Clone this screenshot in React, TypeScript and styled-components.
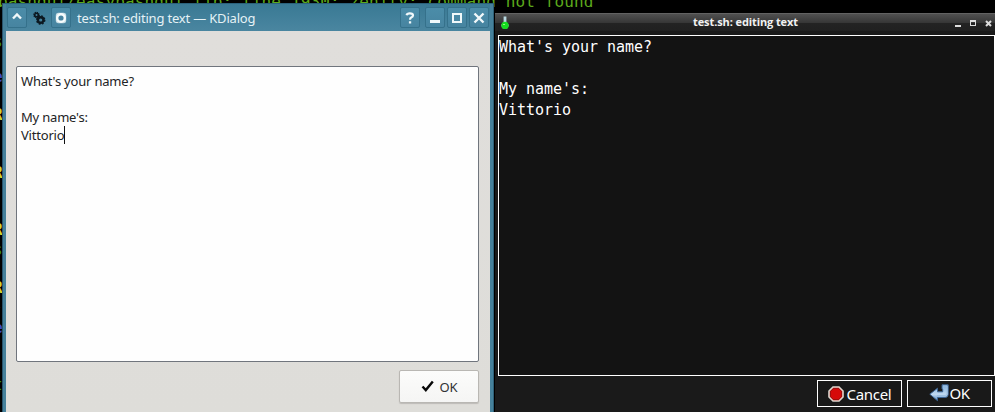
import React from "react";
import styled, { createGlobalStyle } from "styled-components";

const GlobalStyle = createGlobalStyle`
  * { box-sizing: border-box; }
  body { margin: 0; background: #000; }
  svg { display: block; flex: none; }
`;

const Desktop = styled.main`
  position: relative;
  width: 995px;
  height: 412px;
  overflow: hidden;
  background: #000;
`;

const Terminal = styled.div`
  position: absolute;
  inset: 0;
  font: 16px/18px "DejaVu Sans Mono", monospace;
  letter-spacing: 0.13px;
  color: #5ca91c;
  white-space: pre;
`;

const TerminalLine = styled.div<{ $top: number; $left?: number; $color?: string; $bold?: boolean }>`
  position: absolute;
  top: ${(p) => p.$top}px;
  left: ${(p) => p.$left ?? -7}px;
  color: ${(p) => p.$color ?? "#5ca91c"};
  font-weight: ${(p) => (p.$bold ? 700 : 400)};
`;

const KWindow = styled.section`
  position: absolute;
  left: 2px;
  top: 3px;
  width: 492px;
  height: 409px;
  display: flex;
  flex-direction: column;
  padding: 0 3px 0 3px;
  background: #46819b;
  border-left: 1px solid #29546c;
  border-right: 1px solid #2e6077;
  border-top: 1px solid #2b617b;
`;

const KTitleBar = styled.header`
  height: 27px;
  flex: none;
  display: flex;
  align-items: center;
  gap: 2px;
  padding: 2px 1px 2px 1px;
  background: linear-gradient(#397994, #4a86a0);
  color: #e5f2f6;
  font: 13px/20px "Noto Sans", sans-serif;
  letter-spacing: -0.19px;
`;

const KTitle = styled.h1`
  margin: 1px auto 0 4px;
  font: inherit;
  white-space: nowrap;
`;

const KControl = styled.button<{ $plain?: boolean; $shift?: boolean }>`
  width: 20px;
  height: 21px;
  padding: 0;
  margin-left: ${(p) => (p.$shift ? 3 : 0)}px;
  display: grid;
  place-items: center;
  color: #f0f8fa;
  border: 1px solid ${(p) => (p.$plain ? "transparent" : "#35718b")};
  border-radius: 2px;
  background: ${(p) => (p.$plain ? "transparent" : "linear-gradient(#4b8da9, #4784a0)")};
`;

const KContent = styled.div`
  flex: 1;
  display: flex;
  flex-direction: column;
  align-items: flex-end;
  padding: 35px 11px 0 10px;
  background: linear-gradient(#e0dedb, #deddd9);
`;

const LightEditor = styled.div`
  width: 100%;
  height: 296px;
  padding: 5px 4px;
  border: 1px solid #70757d;
  border-radius: 2px;
  background: #fefefe;
  color: #222325;
  font: 13px/18px "Noto Sans", sans-serif;
  letter-spacing: -0.2px;
  white-space: pre;
`;

const Caret = styled.span`
  display: inline-block;
  width: 1px;
  height: 18px;
  background: #111;
  vertical-align: top;
`;

const LightButton = styled.button`
  width: 80px;
  height: 33px;
  margin-top: 8px;
  padding: 0;
  display: flex;
  align-items: center;
  justify-content: center;
  gap: 6px;
  border: 1px solid #b9b7b3;
  border-radius: 2px;
  background: linear-gradient(#fcfcfb, #f5f5f4);
  box-shadow: 0 1px 1px #bdbbb7;
  color: #303234;
  font: 13px/18px "Noto Sans", sans-serif;
  letter-spacing: -0.2px;
`;

const DarkWindow = styled.section`
  position: absolute;
  left: 495px;
  top: 13px;
  width: 500px;
  height: 399px;
  display: flex;
  flex-direction: column;
  background: #1a1a1a;
`;

const DarkTitleBar = styled.header`
  height: 18px;
  flex: none;
  display: grid;
  grid-template-columns: 44px 1fr 45px;
  align-items: center;
  padding: 0 3px 0 5px;
  border-top: 1px solid #626262;
  background: linear-gradient(#505050 0%, #373737 50%, #232323 51%, #202020 100%);
`;

const DarkTitle = styled.h1`
  margin: 0;
  padding-bottom: 2px;
  text-align: center;
  color: #f1f1f1;
  font: bold 11px/16px "Open Sans", sans-serif;
  letter-spacing: -0.1px;
`;

const DarkControls = styled.div`
  display: flex;
  justify-content: flex-end;
  gap: 8px;
`;

const DarkEditor = styled.div`
  height: 341px;
  flex: none;
  margin: 4px 0 0 3px;
  padding-top: 1px;
  border: 1px solid #fff;
  background: #131313;
  color: #fff;
  font: 15px/21px "DejaVu Sans Mono", monospace;
  letter-spacing: -0.03px;
  white-space: pre;
`;

const DarkActions = styled.footer`
  display: flex;
  justify-content: flex-end;
  gap: 5px;
  padding: 4px 3px 0 0;
`;

const DarkButton = styled.button<{ $tight?: boolean }>`
  width: 85px;
  height: 27px;
  display: flex;
  align-items: center;
  justify-content: center;
  gap: ${(p) => (p.$tight ? 0 : 3)}px;
  padding: 0 0 ${(p) => (p.$tight ? 2 : 0)}px;
  border: 1px solid #fff;
  background: #191919;
  color: #fff;
  font: 15px/22px "Noto Sans", sans-serif;
  letter-spacing: ${(p) => (p.$tight ? -0.4 : -0.3)}px;
`;

const terminalMarks = [
  { top: 33, text: "s", color: "#398d15" },
  { top: 68, text: "e", color: "#3948c6", bold: true },
  { top: 106, text: "R", color: "#d4d52e", bold: true },
  { top: 164, text: "R", color: "#d4d52e", bold: true },
  { top: 221, text: "R", color: "#d4d52e", bold: true },
  { top: 241, text: "s", color: "#398d15" },
  { top: 279, text: "R", color: "#d4d52e", bold: true },
  { top: 298, text: "-", color: "#398d15" },
  { top: 319, text: "e", color: "#3948c6", bold: true },
  { top: 376, text: "t", color: "#398d15" },
];

function GearsIcon() {
  return (
    <svg width="14" height="16" viewBox="0 0 14 16" fill="none" stroke="#0c1820">
      <circle cx="4.5" cy="5" r="1.8" strokeWidth="1.6" />
      <circle cx="4.5" cy="5" r="2.7" strokeWidth="1.1" strokeDasharray="1.3 0.8" />
      <circle cx="8.7" cy="10" r="2.8" strokeWidth="2.4" />
      <circle cx="8.7" cy="10" r="4.1" strokeWidth="1.3" strokeDasharray="1.8 1.42" />
    </svg>
  );
}

function FlaskIcon() {
  return (
    <svg width="10" height="14" viewBox="0 0 10 14">
      <path d="M3.6 0.5h2.8V6l2.4 3-1 3-2.8 1-2.8-1-1-3 2.4-3z" fill="#b9d9e2" />
      <circle cx="5" cy="9.4" r="3.7" fill="#16dc20" />
      <path d="M3 8.5h2" stroke="#8aff73" />
    </svg>
  );
}

function ReturnIcon() {
  return (
    <svg width="20" height="18" viewBox="0 0 20 18">
      <defs>
        <linearGradient id="returnFill" x2="0" y2="1">
          <stop stopColor="#7fadd9" />
          <stop offset=".6" stopColor="#c1daf2" />
          <stop offset="1" stopColor="#5589c0" />
        </linearGradient>
      </defs>
      <path d="M13 .8h6.2v9.5q0 3.2-3 3.2H8.5v3.2L.8 10.2l7.7-6V7.8h5.2V5H13z" fill="url(#returnFill)" stroke="#3d6594" />
      <path d="M14 2h4v8q0 1.5-2 1.5H8" fill="none" stroke="#9fc1e2" />
    </svg>
  );
}

export default function App() {
  return (
    <>
      <GlobalStyle />
      <Desktop>
        <Terminal>
          <TerminalLine $top={-7} $left={-2}>bashgui/easybashgui.lib: line 1930: zenity: command not found</TerminalLine>
          {terminalMarks.map((mark) => (
            <TerminalLine key={mark.top} $top={mark.top} $color={mark.color} $bold={mark.bold}>{mark.text}</TerminalLine>
          ))}
        </Terminal>
        <KWindow>
          <KTitleBar>
            <KControl aria-label="Shade">
              <svg width="12" height="12" viewBox="0 0 12 12" fill="none" stroke="currentColor" strokeWidth="2.4"><path d="m2 6.5 4-4 4 4" /></svg>
            </KControl>
            <KControl $plain aria-label="Application"><GearsIcon /></KControl>
            <KControl aria-label="All desktops">
              <svg width="12" height="12" viewBox="0 0 12 12" fill="none"><rect x=".8" y=".8" width="10.4" height="10.4" rx="2.6" fill="#c5dce4" /><circle cx="6" cy="6" r="3.8" fill="#4784a0" stroke="#f7fcfd" strokeWidth="2.4" /></svg>
            </KControl>
            <KTitle>test.sh: editing text — KDialog</KTitle>
            <KControl aria-label="Help">
              <svg width="12" height="14" viewBox="0 0 12 14" fill="none" stroke="currentColor" strokeWidth="2.2"><path d="M2.6 4.2Q3 2.3 5.8 2.3 9 2.3 9 4.5 9 5.8 7.2 6.6 6 7.2 6 8.8M4.9 11.3h2.3" /></svg>
            </KControl>
            <KControl $shift aria-label="Minimize">
              <svg width="12" height="12" viewBox="0 0 12 12"><path d="M1 8h10v3H1z" fill="currentColor" /></svg>
            </KControl>
            <KControl aria-label="Maximize">
              <svg width="12" height="12" viewBox="0 0 12 12" fill="none" stroke="currentColor" strokeWidth="2"><path d="M2 2h8v8H2z" /></svg>
            </KControl>
            <KControl aria-label="Close">
              <svg width="12" height="12" viewBox="0 0 12 12" stroke="currentColor" strokeWidth="2.4"><path d="m1.5 1.5 9 9m0-9-9 9" /></svg>
            </KControl>
          </KTitleBar>
          <KContent>
            <LightEditor>{"What's your name?\n\nMy name's:\nVittorio"}<Caret /></LightEditor>
            <LightButton>
              <svg width="13" height="13" viewBox="0 0 13 13" fill="none" stroke="#080808" strokeWidth="2.4"><path d="m1.5 6.5 3.3 3.6L11.8 1.5" /></svg>
              OK
            </LightButton>
          </KContent>
        </KWindow>
        <DarkWindow>
          <DarkTitleBar>
            <FlaskIcon />
            <DarkTitle>test.sh: editing text</DarkTitle>
            <DarkControls>
              <svg width="7" height="7"><path d="M0 5h6v2H0z" fill="#ddd" /></svg>
              <svg width="7" height="7"><path d="M0 0h6v6H0zM1 2v3h4V2z" fill="#ddd" fillRule="evenodd" /></svg>
              <svg width="7" height="7"><path d="m1 1 5 5m0-5L1 6" stroke="#ddd" strokeWidth="2" /></svg>
            </DarkControls>
          </DarkTitleBar>
          <DarkEditor>{"What's your name?\n\nMy name's:\nVittorio"}</DarkEditor>
          <DarkActions>
            <DarkButton>
              <svg width="16" height="16" viewBox="0 0 16 16"><path d="M5 1h6l4 4v6l-4 4H5l-4-4V5z" fill="#d60909" stroke="#ddd8cf" strokeWidth="1.6" /><path d="M5.5 2.5h5l3 3v5l-3 3h-5l-3-3v-5z" fill="none" stroke="#9b1010" /></svg>
              Cancel
            </DarkButton>
            <DarkButton $tight><ReturnIcon />OK</DarkButton>
          </DarkActions>
        </DarkWindow>
      </Desktop>
    </>
  );
}
